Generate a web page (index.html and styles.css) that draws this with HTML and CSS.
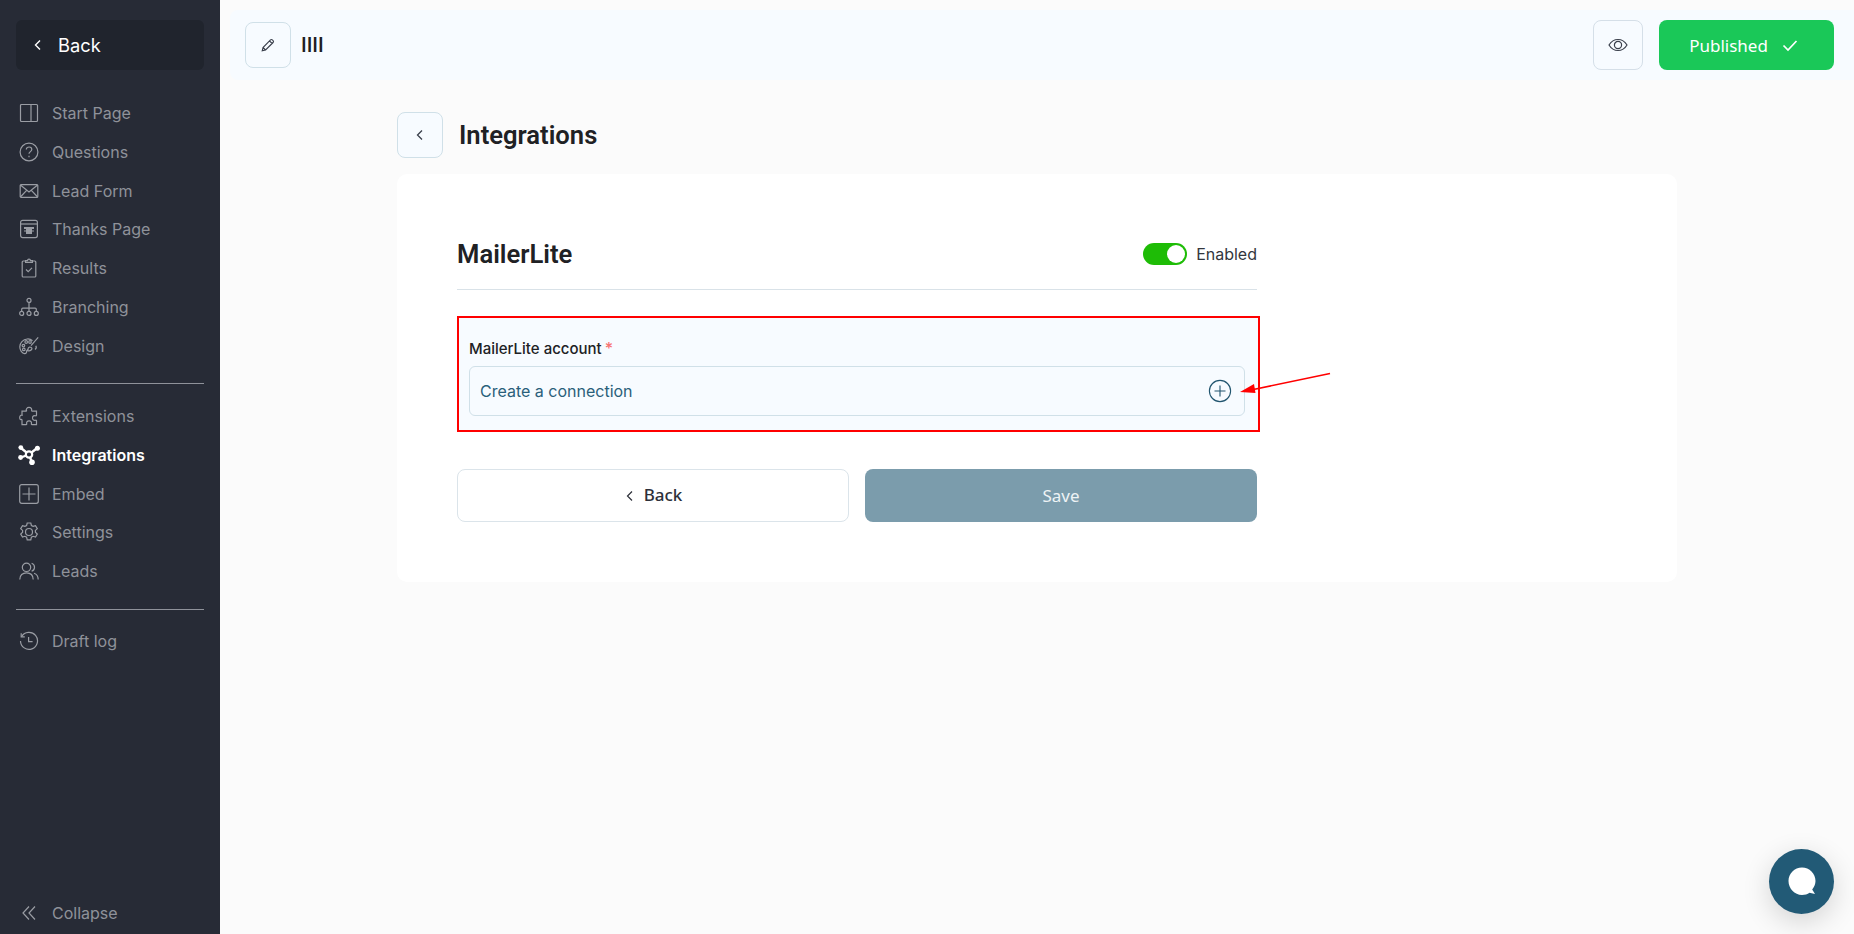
FILE: index.html
```
<!DOCTYPE html>
<html lang="en">
<head>
<meta charset="utf-8">
<title>Integrations</title>
<link rel="stylesheet" href="styles.css">
</head>
<body>
<div class="app">
  <aside class="sidebar">
    <a class="side-back"><svg class="chev" viewBox="0 0 12 12"><path d="M8 1.500 3.500 6 8 10.500"/></svg><span>Back</span></a>
    <nav class="nav nav-first">
      <a class="item"><svg viewBox="0 0 20 20"><rect x="1.500" y="1.500" width="17" height="17" rx="1"/><path d="M12 1.500v17"/></svg><span>Start Page</span></a>
      <a class="item"><svg viewBox="0 0 20 20"><circle cx="10" cy="10" r="8.900"/><path d="M7.300 7.600c0-1.600 1.200-2.600 2.800-2.600s2.700 1 2.700 2.400c0 2.200-2.800 2.200-2.800 4.400"/><path d="M10 13.700v1.500"/></svg><span>Questions</span></a>
      <a class="item"><svg viewBox="0 0 20 20"><rect x="1.200" y="3.600" width="17.600" height="12.800" rx="1"/><path d="M1.400 4 10 11 18.600 4M1.400 16l6-6.400M18.600 16l-6-6.400"/></svg><span>Lead Form</span></a>
      <a class="item"><svg viewBox="0 0 20 20"><rect x="1.600" y="1.400" width="16.800" height="17.200" rx="2"/><path d="M1.600 5h16.800"/><path class="fill" d="M5 8h10v2h-2v1.500h2v1H13V15H7v-2.500H5v-1h2V10H5z"/></svg><span>Thanks Page</span></a>
      <a class="item"><svg viewBox="0 0 20 20"><path d="M6.600 3H4.200c-.6 0-1 .4-1 1v14c0 .6.4 1 1 1h11.600c.6 0 1-.4 1-1V4c0-.6-.4-1-1-1h-2.400"/><path d="M6.600 4.400V2.600h2a1.400 1.400 0 0 1 2.800 0h2v1.800z"/><path d="M7 11.500l2.200 2.200L13 9.800"/></svg><span>Results</span></a>
      <a class="item"><svg viewBox="0 0 20 20"><circle cx="10" cy="3.400" r="2"/><circle cx="2.700" cy="16.400" r="2"/><circle cx="10" cy="16.400" r="2"/><circle cx="17.300" cy="16.400" r="2"/><path d="M10 5.400v9M2.700 14.400v-2.200c0-.7.400-1.100 1.100-1.100h12.400c.7 0 1.100.4 1.100 1.100v2.200"/></svg><span>Branching</span></a>
      <a class="item"><svg viewBox="0 0 20 20"><path d="M13.500 4.800C12 3.400 10.200 2.800 8.200 3 4 3.400.8 6.800.8 10.800c0 3.400 2.200 6.600 4.800 6.800 1.700.1 2-1.100 2-2.200 0-1 .8-1.600 1.800-1.400"/><circle cx="4.400" cy="9.600" r="1.300"/><circle cx="7.200" cy="6" r="1.300"/><circle cx="11" cy="6" r="1.300"/><circle cx="4.800" cy="13.400" r="1.300"/><path d="M19.200 1.400 12 9.600M16.800 9.800c.8 1.400.4 2.800-.8 3.600M10.500 11c-1.600.7-1.600 2.400-2 3.600 1.600.4 3.400.2 4.200-1.200.6-1-.1-2.400-2.200-2.400z"/></svg><span>Design</span></a>
    </nav>
    <hr class="rule">
    <nav class="nav nav-mid">
      <a class="item"><svg viewBox="0 0 20 20"><path d="M7.400 4.400C7 3.400 7.800 1.300 10 1.300s3 2 2.600 3.100c-.2.500.1.800.6.800h4.300v4c0 .5-.4.700-.9.500-1.300-.5-3.100.2-3.100 2.200s1.800 2.800 3.100 2.300c.5-.2.900 0 .9.500v3.900h-4.600c-.5 0-.7-.4-.5-.9.500-1.200-.3-2.800-2.300-2.800s-2.900 1.600-2.400 2.800c.2.500 0 .9-.5.900H3v-4.600c0-.5-.4-.7-.9-.5-1 .3-1.400-.6-1.400-1.900 0-2.200 1.600-2.600 2.300-2.300.5.200 0-.3 0-.8V5.200h3.900c.5 0 .6-.3.400-.8z"/></svg><span>Extensions</span></a>
      <a class="item active"><svg viewBox="0 0 22 20"><path class="thick" d="M3 3l8 6.500L18.600 3.500M3 12.500l8-3 3 8"/><circle class="solid" cx="2.800" cy="2.600" r="2.400"/><circle class="solid" cx="19.400" cy="3.300" r="2.500"/><circle class="solid" cx="2.600" cy="12.500" r="2.400"/><circle class="solid" cx="14" cy="17.200" r="2.800"/><circle class="hub" cx="11" cy="9.500" r="3.200"/></svg><span>Integrations</span></a>
      <a class="item"><svg viewBox="0 0 20 20"><rect x=".7" y=".7" width="18.600" height="18.600" rx="2"/><path d="M10 3.500v13M3.500 10h13"/></svg><span>Embed</span></a>
      <a class="item"><svg viewBox="0 0 20 20"><circle cx="10" cy="10" r="3.500"/><path d="M8.200 1h3.600l.6 2.500 1.700.9 2.400-.8 1.800 3.100-1.900 1.700v1.900l1.900 1.700-1.800 3.100-2.400-.8-1.700.9-.6 2.600H8.200l-.6-2.600-1.700-.9-2.400.8-1.800-3.100 1.900-1.700V8.400L1.700 6.700l1.800-3.100 2.400.8 1.700-.9z"/></svg><span>Settings</span></a>
      <a class="item"><svg viewBox="0 0 20 20"><circle cx="7.500" cy="6.300" r="4.200"/><path d="M.8 18.500c0-4.300 2.700-6.700 6.700-6.700s6.700 2.400 6.700 6.700M12.600 2.300a4.200 4.200 0 0 1 0 8M15 12.200c2.600.8 4.200 3 4.200 6.300"/></svg><span>Leads</span></a>
    </nav>
    <hr class="rule rule-low">
    <nav class="nav">
      <a class="item"><svg viewBox="0 0 20 20"><path d="M2.700 5.500A8.500 8.500 0 1 1 1.500 10"/><path d="M2.200 2.200v3.600h3.600M9.600 6v4.600h4"/></svg><span>Draft log</span></a>
    </nav>
    <a class="item collapse"><svg viewBox="0 0 20 20"><path d="M10 3.500 4 10l6 6.500M16 3.500 10 10l6 6.500"/></svg><span>Collapse</span></a>
  </aside>

  <div class="main">
    <header class="topbar">
      <div class="top-left">
        <button class="square"><svg class="dark-icon" viewBox="0 0 16 16"><path d="M2.200 13.800l.8-3.300 7.500-7.600a1.300 1.300 0 0 1 1.800 0l.8.800a1.300 1.300 0 0 1 0 1.800l-7.500 7.500zM3 10.500l2.600 2.500M9.500 3.900l2.600 2.600"/></svg></button>
        <strong class="quiz-name">IIII</strong>
      </div>
      <div class="top-right">
        <button class="square eye"><svg class="dark-icon eye-icon" viewBox="0 0 20 14"><path d="M1 7c2.200-3.600 5.300-5.500 9-5.500s6.800 1.900 9 5.500c-2.200 3.600-5.300 5.500-9 5.500S3.200 10.600 1 7z"/><circle cx="10" cy="7" r="3.600"/></svg></button>
        <button class="publish"><span>Published</span><svg viewBox="0 0 16 16"><path d="M1.500 8.500l4.500 4.500 8.500-9"/></svg></button>
      </div>
    </header>

    <section class="content">
      <div class="page-head">
        <button class="square"><svg class="small-chev" viewBox="0 0 12 12"><path d="M8 1.500 3.500 6 8 10.500"/></svg></button>
        <h1>Integrations</h1>
      </div>
      <div class="card">
        <div class="form">
          <div class="form-head">
            <h2>MailerLite</h2>
            <div class="enable"><span class="toggle"><i></i></span><span>Enabled</span></div>
          </div>
          <div class="annot">
            <label class="field-label">MailerLite account <em>*</em></label>
            <div class="select">
              <span>Create a connection</span>
              <svg class="plus" viewBox="0 0 24 24"><circle cx="12" cy="12" r="10.600"/><path d="M12 6.500v11M6.500 12h11"/></svg>
            </div>
            <svg class="arrow" viewBox="0 0 100 30"><path class="arrow-line" d="M91 2.500 12 19"/><path class="arrow-head" d="M1 21 15 13l1.500 9z"/></svg>
          </div>
          <div class="actions">
            <button class="btn-back"><svg viewBox="0 0 12 12"><path d="M8 1.500 3.500 6 8 10.500"/></svg><span>Back</span></button>
            <button class="btn-save">Save</button>
          </div>
        </div>
      </div>
    </section>
  </div>
</div>
<button class="chat"><svg viewBox="0 0 32 32"><path d="M15 1.500C7.500 1.500 1.500 7.500 1.500 15S7.500 29 15 29c2.800 0 5.500-.8 7.500-2.200l5.500 1.200-2.800-4.500c2-2.500 3.300-5.500 3.300-8.500C28.500 7.500 22.500 1.500 15 1.500z"/></svg></button>
</body>
</html>
```
FILE: styles.css
```
* { box-sizing: border-box; }
html, body { margin: 0; height: 100%; }
body { background: #fbfbfb; font-family: Inter, "Liberation Sans", sans-serif; overflow: hidden; }
button { font: inherit; cursor: pointer; padding: 0; }
svg { display: block; fill: none; stroke: currentColor; }

.app { display: flex; height: 934px; }

.sidebar { width: 220px; flex: none; background: #272b36; padding: 20px 16px 0; display: flex; flex-direction: column; color: #8f929a; }
.side-back { height: 50px; background: #20242d; border-radius: 6px; display: flex; align-items: center; padding-left: 16px; gap: 14px; color: #fff; font-size: 18.300px; font-weight: 400; }
.chev { width: 12px; height: 12px; stroke-width: 1.400; }

.nav { display: flex; flex-direction: column; }
.nav-first { margin-top: 23.700px; }
.nav-mid { margin-top: -.6px; }
.item { height: 38.800px; display: flex; align-items: center; gap: 13px; padding-left: 3px; font-size: 16px; color: #8f929a; }
.item svg { width: 20px; height: 20px; flex: none; stroke-width: 1.200; color: #9a9da4; }
.item svg .fill { fill: currentColor; stroke: none; }
.item.active { color: #fff; font-weight: 600; }
.item.active svg { width: 22px; height: 20px; margin-left: -1px; margin-right: -1px; color: #fff; }
.thick { stroke-width: 2.400; }
.solid { fill: #fff; stroke: none; }
.hub { fill: #272b36; stroke: #fff; stroke-width: 2.200; }
.rule { width: 188px; margin: 17.500px 0 13.500px; border: 0; border-top: 1px solid #8f929a; }
.rule-low { margin: 18px 0 11.800px; }
.collapse { margin-top: auto; margin-bottom: 1.500px; }

.main { flex: 1; min-width: 0; }
.topbar { margin: 10px 0 0 10px; height: 70px; background: #f7fbff; border-radius: 8px 0 0 8px; padding: 0 20px 0 15px; display: flex; align-items: center; justify-content: space-between; }
.top-left, .top-right { display: flex; align-items: center; }
.top-left { gap: 10px; }
.top-right { gap: 16px; }
.square { width: 46px; height: 46px; flex: none; background: #f7fbff; border: 1px solid #d0e0e8; border-radius: 8px; display: flex; align-items: center; justify-content: center; color: #3a3f4b; }
.dark-icon { width: 16px; height: 16px; stroke-width: 1.100; }
.quiz-name { font: 500 20px Roboto, sans-serif; color: #1f1f1f; }
.eye { width: 50px; height: 50px; border-color: #d5dfe8; }
.eye-icon { width: 20px; height: 14px; stroke-width: 1.200; }
.publish { width: 175px; height: 50px; background: #1ac858; color: #fff; border: 0; border-radius: 8px; display: flex; align-items: center; justify-content: center; gap: 14px; padding-right: 6px; font: 400 17px "Noto Sans", sans-serif; }
.publish svg { width: 16px; height: 16px; stroke-width: 1.700; }

.content { width: 1280px; margin-left: 177px; }
.page-head { margin-top: 32px; height: 46px; display: flex; align-items: center; gap: 16px; }
.small-chev { width: 12px; height: 12px; stroke-width: 1.300; }
h1 { margin: 0; font: 600 25.600px Roboto, sans-serif; color: #202124; }
.card { margin-top: 16px; background: #fff; border-radius: 10px; padding: 60px; height: 407.500px; }
.form { width: 800px; }
.form-head { height: 56px; display: flex; align-items: flex-start; justify-content: space-between; border-bottom: 1px solid #d9e2e8; }
h2 { margin: 0; font: 600 25.600px/40px Roboto, sans-serif; color: #202124; }
.enable { display: flex; align-items: center; gap: 9px; height: 40px; font-size: 16px; color: #33363d; }
.toggle { width: 44px; height: 22px; border-radius: 11px; background: #1ebc06; display: block; padding: 2px 2px 2px 24px; }
.toggle i { display: block; width: 18px; height: 18px; border-radius: 50%; background: #fff; }

.annot { position: relative; margin-top: 25.500px; width: 803px; height: 116px; border: 2px solid #f00; background: #f7fbff; padding: 20px 10px 0; }
.field-label { display: block; font: 500 15px/20px Inter, sans-serif; color: #202124; }
.field-label em { color: #f87171; font-style: normal; font-size: 16px; margin-left: -1px; }
.select { margin-top: 7px; width: 776px; height: 50px; border: 1px solid #d0e0e8; border-radius: 6px; padding: 0 12px 0 10px; display: flex; align-items: center; justify-content: space-between; font: 400 16px Inter, sans-serif; color: #2a5f7a; }
.plus { width: 24px; height: 24px; stroke-width: 1.100; color: #22556f; }
.arrow { position: absolute; left: 780px; top: 53px; width: 100px; height: 30px; overflow: visible; }
.arrow-line { stroke: #f00; stroke-width: 1.600; }
.arrow-head { fill: #f00; stroke: none; }

.actions { margin-top: 37.500px; display: grid; grid-template-columns: 1fr 1fr; gap: 16px; }
.btn-back, .btn-save { height: 53px; border-radius: 8px; font: 500 17px "Noto Sans", sans-serif; display: flex; align-items: center; justify-content: center; }
.btn-back { background: #fff; border: 1px solid #dbe4ea; color: #2d3039; gap: 8px; padding-bottom: 2px; }
.btn-back svg { width: 12px; height: 12px; stroke-width: 1.200; margin-top: 2px; }
.btn-save { background: #7b9cac; border: 0; color: #eef3f5; font-weight: 400; }

.chat { position: fixed; left: 1769px; top: 849px; width: 65px; height: 65px; border-radius: 50%; background: #225a76; border: 0; box-shadow: 0 8px 28px rgba(0,0,0,.16); display: flex; align-items: center; justify-content: center; }
.chat svg { width: 32px; height: 32px; fill: #fff; stroke: none; margin-left: 2px; }
```
